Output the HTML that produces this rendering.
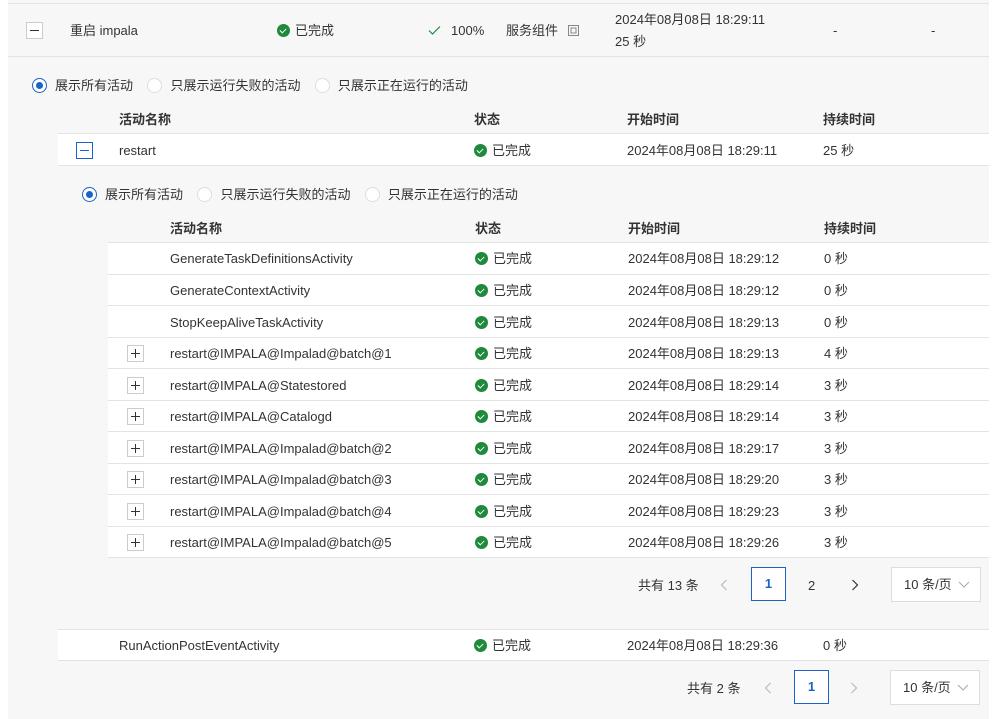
<!DOCTYPE html>
<html><head><meta charset="utf-8"><style>
*{margin:0;padding:0;box-sizing:border-box}
body{width:1002px;height:719px;background:#fff;font-family:"Liberation Sans","Noto Sans CJK SC",sans-serif;font-size:13px;color:#333;position:relative;overflow:hidden}
.a{position:absolute;white-space:nowrap;line-height:16px;margin-top:1px}
.bg{position:absolute;left:8px;top:0;width:981px;height:719px;background:#f7f7f7}
.row{position:absolute;background:#fff;border-bottom:1px solid #e3e3e3}
.line{position:absolute;height:1px;background:#e3e3e3}
.ok{display:inline-block;width:13px;height:13px;border-radius:50%;background:#1f8a3b;vertical-align:-2px;margin-right:5px;position:relative}
.ok:after{content:"";position:absolute;left:4px;top:2.5px;width:3px;height:5px;border:solid #fff;border-width:0 1.5px 1.5px 0;transform:rotate(45deg)}
.box{position:absolute;width:17px;height:17px;border:1px solid #ccc;background:#fff}
.box:before{content:"";position:absolute;left:3px;top:7px;width:9px;height:1px;background:#333}
.plus:after{content:"";position:absolute;left:7px;top:3px;width:1px;height:9px;background:#333}
.blue{border-color:#1b63c6}.blue:before{background:#1b63c6}
.rad{display:inline-block;width:15px;height:15px;border-radius:50%;border:1px solid #ddd;background:#fff;vertical-align:-3px;margin-right:8px;position:relative}
.rad.on{border-color:#1b63c6}
.rad.on:after{content:"";position:absolute;left:3px;top:3px;width:7px;height:7px;border-radius:50%;background:#1b63c6}
.b{font-weight:bold}
.pg{position:absolute;width:35px;height:34px;border:1px solid #1b63c6;background:#fff;color:#1b63c6;font-weight:bold;text-align:center;line-height:32px}
.sel{position:absolute;width:90px;height:35px;border:1px solid #ddd;background:#fff;line-height:33px;padding-left:12px}
.sel svg{position:absolute;right:10px;top:13px}
svg.ic{position:absolute}
</style></head><body>
<div class="bg"></div>
<div class="line" style="left:8px;top:3px;width:981px"></div>
<div class="line" style="left:8px;top:56px;width:981px"></div>
<div class="box" style="left:26px;top:22px"></div>
<div class="a" style="left:70px;top:22px">重启 impala</div>
<div class="a" style="left:277px;top:22px"><span class="ok"></span>已完成</div>
<svg class="ic" style="left:428px;top:25px" width="13" height="11" viewBox="0 0 13 11"><path d="M1 5.5L4.5 9L12 1.5" fill="none" stroke="#1f8a3b" stroke-width="1.2"/></svg>
<div class="a" style="left:451px;top:22px">100%</div>
<div class="a" style="left:506px;top:22px">服务组件</div>
<svg class="ic" style="left:568px;top:25px" width="11" height="11" viewBox="0 0 11 11"><rect x="0.5" y="0.5" width="10" height="10" fill="none" stroke="#888"/><rect x="3" y="3" width="5" height="5" fill="none" stroke="#888"/></svg>
<div class="a" style="left:615px;top:11px">2024年08月08日 18:29:11</div>
<div class="a" style="left:615px;top:33px">25 秒</div>
<div class="a" style="left:833px;top:22px">-</div>
<div class="a" style="left:931px;top:22px">-</div>

<div class="a" style="left:32px;top:77px"><span class="rad on"></span>展示所有活动 &nbsp;&nbsp;&nbsp;<span class="rad"></span>只展示运行失败的活动 &nbsp;&nbsp;&nbsp;<span class="rad"></span>只展示正在运行的活动</div>
<div class="a b" style="left:119px;top:111px">活动名称</div>
<div class="a b" style="left:474px;top:111px">状态</div>
<div class="a b" style="left:627px;top:111px">开始时间</div>
<div class="a b" style="left:823px;top:111px">持续时间</div>
<div class="row" style="left:58px;top:133px;width:931px;height:33px;border-top:1px solid #e3e3e3"></div>
<div class="box blue" style="left:76px;top:142px"></div>
<div class="a" style="left:119px;top:142px">restart</div>
<div class="a" style="left:474px;top:142px"><span class="ok"></span>已完成</div>
<div class="a" style="left:627px;top:142px">2024年08月08日 18:29:11</div>
<div class="a" style="left:823px;top:142px">25 秒</div>

<div class="a" style="left:82px;top:186px"><span class="rad on"></span>展示所有活动 &nbsp;&nbsp;&nbsp;<span class="rad"></span>只展示运行失败的活动 &nbsp;&nbsp;&nbsp;<span class="rad"></span>只展示正在运行的活动</div>
<div class="a b" style="left:170px;top:220px">活动名称</div>
<div class="a b" style="left:475px;top:220px">状态</div>
<div class="a b" style="left:628px;top:220px">开始时间</div>
<div class="a b" style="left:824px;top:220px">持续时间</div>
<div class="line" style="left:108px;top:242px;width:881px"></div>

<div class="row" style="left:108px;top:243px;width:881px;height:31.5px"></div>
<div class="row" style="left:108px;top:274.5px;width:881px;height:31.5px"></div>
<div class="row" style="left:108px;top:306px;width:881px;height:31.5px"></div>
<div class="row" style="left:108px;top:337.5px;width:881px;height:31.5px"></div>
<div class="row" style="left:108px;top:369px;width:881px;height:31.5px"></div>
<div class="row" style="left:108px;top:400.5px;width:881px;height:31.5px"></div>
<div class="row" style="left:108px;top:432px;width:881px;height:31.5px"></div>
<div class="row" style="left:108px;top:463.5px;width:881px;height:31.5px"></div>
<div class="row" style="left:108px;top:495px;width:881px;height:31.5px"></div>
<div class="row" style="left:108px;top:526.5px;width:881px;height:31.5px"></div>

<div class="a" style="left:170px;top:250px">GenerateTaskDefinitionsActivity</div><div class="a" style="left:475px;top:250px"><span class="ok"></span>已完成</div><div class="a" style="left:628px;top:250px">2024年08月08日 18:29:12</div><div class="a" style="left:824px;top:250px">0 秒</div>
<div class="a" style="left:170px;top:282px">GenerateContextActivity</div><div class="a" style="left:475px;top:282px"><span class="ok"></span>已完成</div><div class="a" style="left:628px;top:282px">2024年08月08日 18:29:12</div><div class="a" style="left:824px;top:282px">0 秒</div>
<div class="a" style="left:170px;top:314px">StopKeepAliveTaskActivity</div><div class="a" style="left:475px;top:314px"><span class="ok"></span>已完成</div><div class="a" style="left:628px;top:314px">2024年08月08日 18:29:13</div><div class="a" style="left:824px;top:314px">0 秒</div>
<div class="box plus" style="left:127px;top:345px"></div><div class="a" style="left:170px;top:345px">restart@IMPALA@Impalad@batch@1</div><div class="a" style="left:475px;top:345px"><span class="ok"></span>已完成</div><div class="a" style="left:628px;top:345px">2024年08月08日 18:29:13</div><div class="a" style="left:824px;top:345px">4 秒</div>
<div class="box plus" style="left:127px;top:377px"></div><div class="a" style="left:170px;top:377px">restart@IMPALA@Statestored</div><div class="a" style="left:475px;top:377px"><span class="ok"></span>已完成</div><div class="a" style="left:628px;top:377px">2024年08月08日 18:29:14</div><div class="a" style="left:824px;top:377px">3 秒</div>
<div class="box plus" style="left:127px;top:408px"></div><div class="a" style="left:170px;top:408px">restart@IMPALA@Catalogd</div><div class="a" style="left:475px;top:408px"><span class="ok"></span>已完成</div><div class="a" style="left:628px;top:408px">2024年08月08日 18:29:14</div><div class="a" style="left:824px;top:408px">3 秒</div>
<div class="box plus" style="left:127px;top:440px"></div><div class="a" style="left:170px;top:440px">restart@IMPALA@Impalad@batch@2</div><div class="a" style="left:475px;top:440px"><span class="ok"></span>已完成</div><div class="a" style="left:628px;top:440px">2024年08月08日 18:29:17</div><div class="a" style="left:824px;top:440px">3 秒</div>
<div class="box plus" style="left:127px;top:471px"></div><div class="a" style="left:170px;top:471px">restart@IMPALA@Impalad@batch@3</div><div class="a" style="left:475px;top:471px"><span class="ok"></span>已完成</div><div class="a" style="left:628px;top:471px">2024年08月08日 18:29:20</div><div class="a" style="left:824px;top:471px">3 秒</div>
<div class="box plus" style="left:127px;top:503px"></div><div class="a" style="left:170px;top:503px">restart@IMPALA@Impalad@batch@4</div><div class="a" style="left:475px;top:503px"><span class="ok"></span>已完成</div><div class="a" style="left:628px;top:503px">2024年08月08日 18:29:23</div><div class="a" style="left:824px;top:503px">3 秒</div>
<div class="box plus" style="left:127px;top:534px"></div><div class="a" style="left:170px;top:534px">restart@IMPALA@Impalad@batch@5</div><div class="a" style="left:475px;top:534px"><span class="ok"></span>已完成</div><div class="a" style="left:628px;top:534px">2024年08月08日 18:29:26</div><div class="a" style="left:824px;top:534px">3 秒</div>

<div class="a" style="left:638px;top:577px">共有 13 条</div>
<svg class="ic" style="left:720px;top:579px" width="8" height="12" viewBox="0 0 8 12"><path d="M6.5 1L1.5 6L6.5 11" fill="none" stroke="#bbb" stroke-width="1.2"/></svg>
<div class="pg" style="left:751px;top:567px">1</div>
<div class="a" style="left:808px;top:577px">2</div>
<svg class="ic" style="left:851px;top:579px" width="8" height="12" viewBox="0 0 8 12"><path d="M1.5 1L6.5 6L1.5 11" fill="none" stroke="#333" stroke-width="1.2"/></svg>
<div class="sel" style="left:891px;top:567px">10 条/页<svg width="12" height="7" viewBox="0 0 12 7"><path d="M1 1L6 6L11 1" fill="none" stroke="#aaa" stroke-width="1"/></svg></div>

<div class="line" style="left:58px;top:629px;width:931px"></div>
<div class="row" style="left:58px;top:630px;width:931px;height:31px"></div>
<div class="a" style="left:119px;top:637px">RunActionPostEventActivity</div>
<div class="a" style="left:474px;top:637px"><span class="ok"></span>已完成</div>
<div class="a" style="left:627px;top:637px">2024年08月08日 18:29:36</div>
<div class="a" style="left:823px;top:637px">0 秒</div>

<div class="a" style="left:687px;top:680px">共有 2 条</div>
<svg class="ic" style="left:764px;top:682px" width="8" height="12" viewBox="0 0 8 12"><path d="M6.5 1L1.5 6L6.5 11" fill="none" stroke="#bbb" stroke-width="1.2"/></svg>
<div class="pg" style="left:794px;top:670px">1</div>
<svg class="ic" style="left:850px;top:682px" width="8" height="12" viewBox="0 0 8 12"><path d="M1.5 1L6.5 6L1.5 11" fill="none" stroke="#bbb" stroke-width="1.2"/></svg>
<div class="sel" style="left:890px;top:670px">10 条/页<svg width="12" height="7" viewBox="0 0 12 7"><path d="M1 1L6 6L11 1" fill="none" stroke="#aaa" stroke-width="1"/></svg></div>
</body></html>
